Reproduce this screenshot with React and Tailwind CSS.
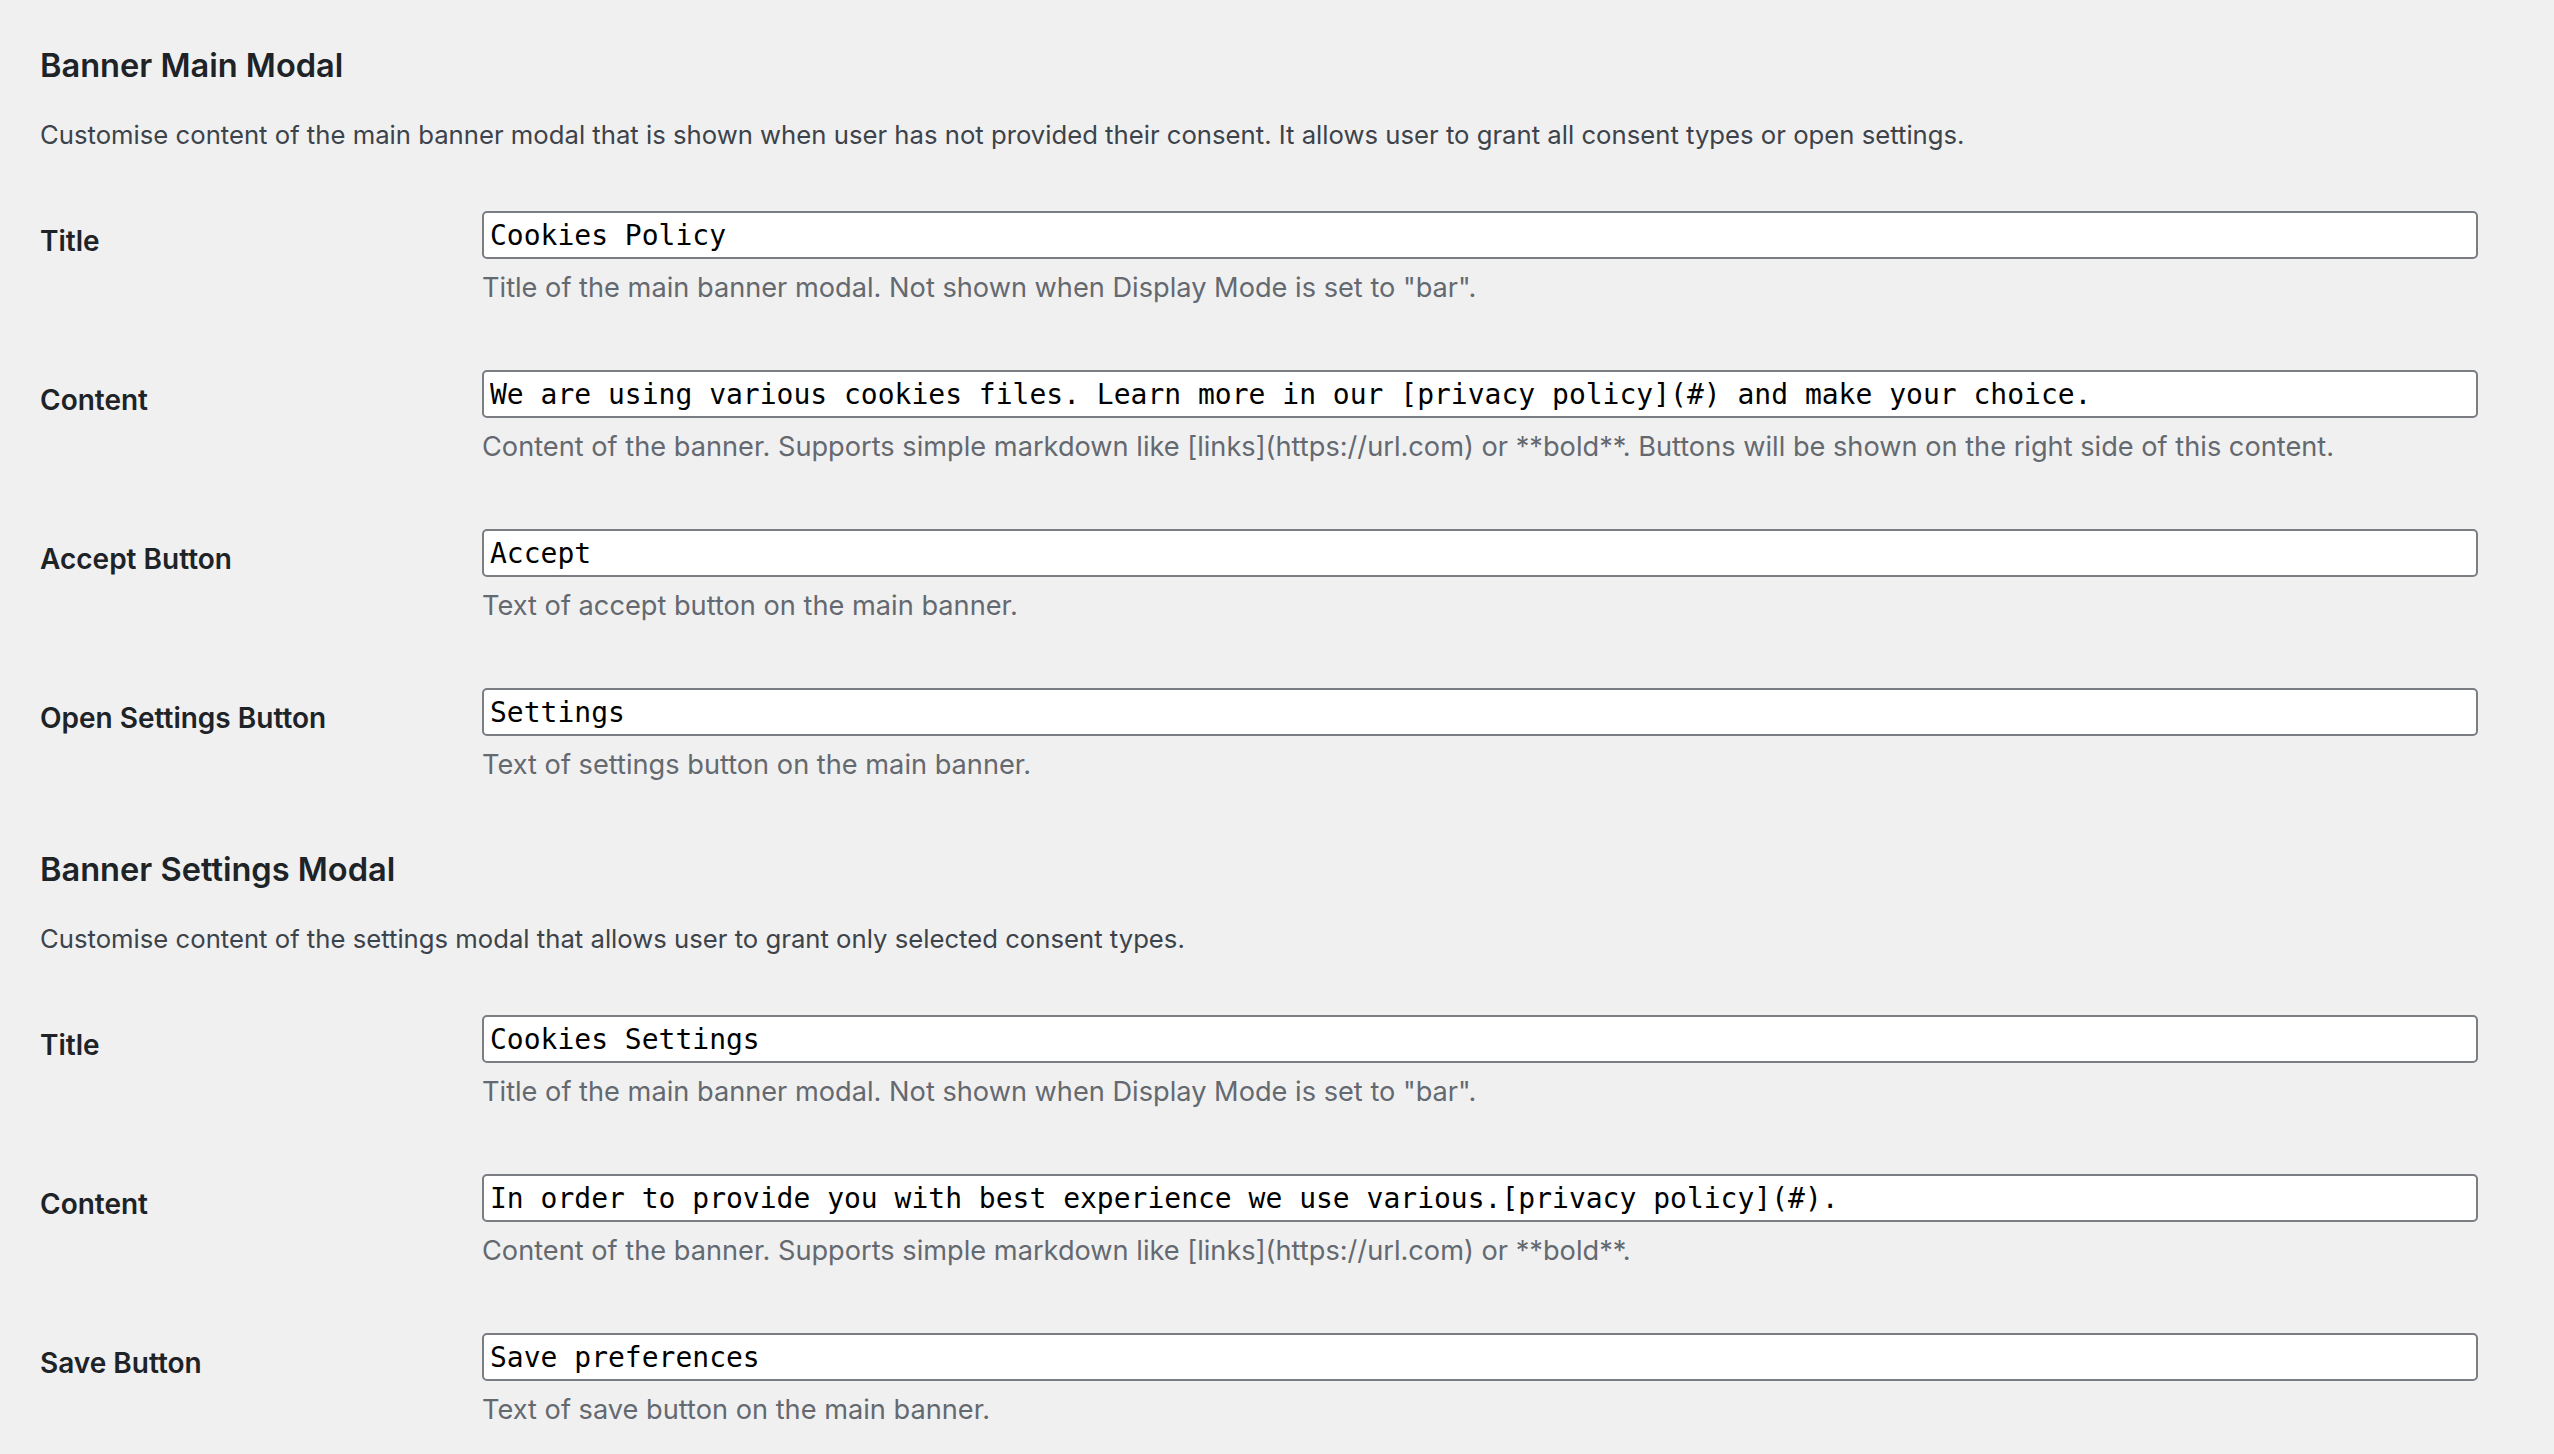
import React from "react";

const sections = [
  {
    title: "Banner Main Modal",
    intro:
      "Customise content of the main banner modal that is shown when user has not provided their consent. It allows user to grant all consent types or open settings.",
    fields: [
      {
        label: "Title",
        value: "Cookies Policy",
        help: 'Title of the main banner modal. Not shown when Display Mode is set to "bar".',
      },
      {
        label: "Content",
        value: "We are using various cookies files. Learn more in our [privacy policy](#) and make your choice.",
        help: "Content of the banner. Supports simple markdown like [links](https://url.com) or **bold**. Buttons will be shown on the right side of this content.",
      },
      { label: "Accept Button", value: "Accept", help: "Text of accept button on the main banner." },
      { label: "Open Settings Button", value: "Settings", help: "Text of settings button on the main banner." },
    ],
  },
  {
    title: "Banner Settings Modal",
    intro: "Customise content of the settings modal that allows user to grant only selected consent types.",
    fields: [
      {
        label: "Title",
        value: "Cookies Settings",
        help: 'Title of the main banner modal. Not shown when Display Mode is set to "bar".',
      },
      {
        label: "Content",
        value: "In order to provide you with best experience we use various.[privacy policy](#).",
        help: "Content of the banner. Supports simple markdown like [links](https://url.com) or **bold**.",
      },
      { label: "Save Button", value: "Save preferences", help: "Text of save button on the main banner." },
    ],
  },
];

const Field = ({ label, value, help }) => (
  <div className="flex items-start pb-[63px]">
    <label className="w-[442px] shrink-0 mt-[12px] text-[28px] leading-[36px] font-semibold text-[#1d2327]">
      {label}
    </label>
    <div className="flex-1">
      <input
        type="text"
        defaultValue={value}
        className="w-full h-[48px] bg-white border-2 border-[#7a7d82] rounded-[5px] px-[6px] text-[28px] text-black outline-none font-['DejaVu_Sans_Mono',monospace]"
      />
      <p className="mt-[9px] h-[39px] text-[27.2px] leading-[39px] text-[#646970]">{help}</p>
    </div>
  </div>
);

export default function App() {
  return (
    <div className="min-h-screen bg-[#f0f0f1] pl-[40px] pr-[76px] pt-[43px] font-['Inter',sans-serif]">
      {sections.map((s) => (
        <section key={s.title}>
          <h2 className="text-[32.6px] leading-[44px] font-semibold text-[#1d2327]">{s.title}</h2>
          <p className="mt-[28px] mb-[57px] text-[25.7px] leading-[39px] text-[#3c434a]">{s.intro}</p>
          {s.fields.map((f) => (
            <Field key={f.label + f.value} {...f} />
          ))}
        </section>
      ))}
    </div>
  );
}
